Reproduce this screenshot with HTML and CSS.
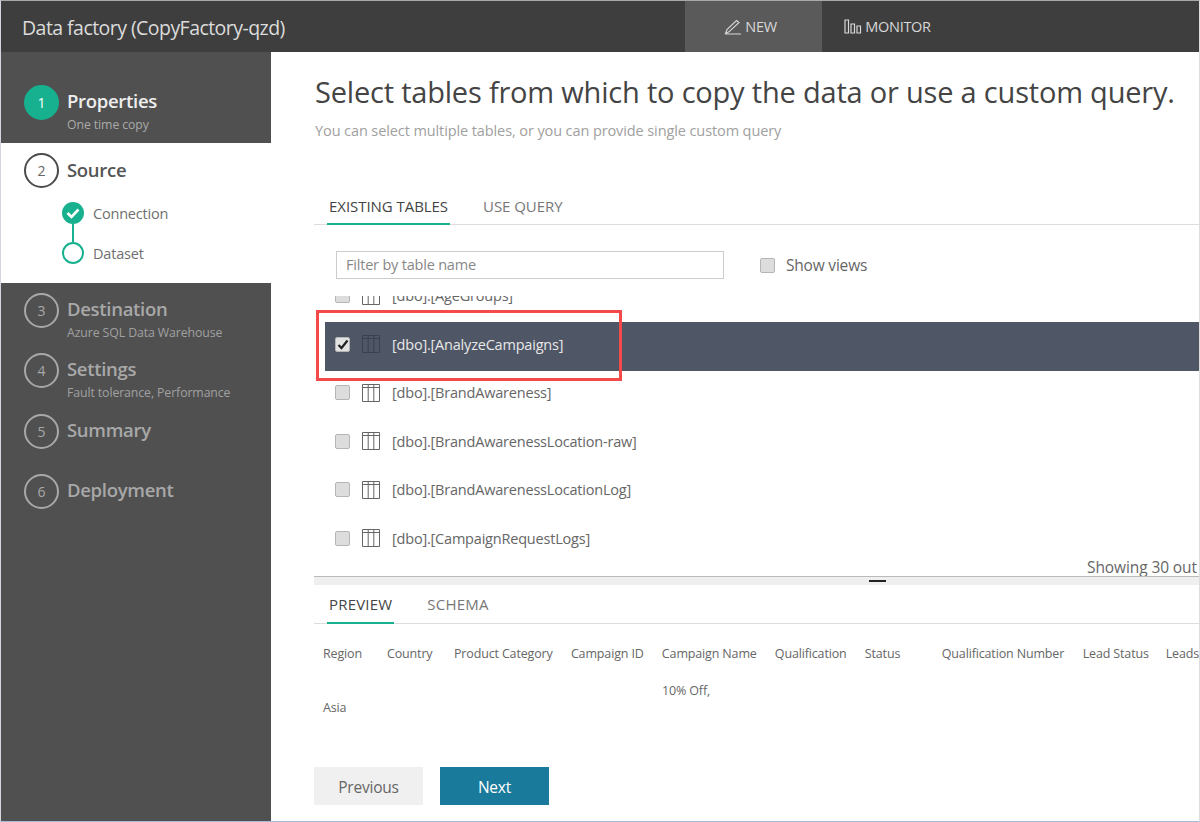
FILE: index.html
```html
<!DOCTYPE html>
<html lang="en">
<head>
<meta charset="utf-8">
<title>Copy data</title>
<link rel="stylesheet" href="styles.css">
</head>
<body>
<div class="app">
  <header class="topbar">
    <div class="brand">Data factory (CopyFactory-qzd)</div>
    <nav class="topnav">
      <div class="topnav-item active">
        <svg class="nav-icon" width="18" height="16" viewBox="0 0 18 16"><path d="M1.5 14.5 L3 10.5 L12.5 1.5 L15 3.5 L5 12.8 Z M1.5 15 H17" fill="none" stroke="#d8d8d8" stroke-width="1.1"/></svg>
        <span>NEW</span>
      </div>
      <div class="topnav-item">
        <svg class="nav-icon" width="18" height="16" viewBox="0 0 18 16"><path d="M1 1h3.5v13H1z M7 5h3.5v9H7z M13 7h3.500v7H13z" fill="none" stroke="#d8d8d8" stroke-width="1.200"/></svg>
        <span>MONITOR</span>
      </div>
    </nav>
  </header>
  <div class="body">
    <aside class="sidebar">
      <div class="step step-done">
        <div class="num num-green">1</div>
        <div class="step-text"><div class="step-title">Properties</div><div class="step-sub">One time copy</div></div>
      </div>
      <div class="step-open">
        <div class="step-head">
          <div class="num num-dark">2</div>
          <div class="step-title">Source</div>
        </div>
        <div class="subs">
          <div class="sub"><svg class="sub-dot" width="22" height="22" viewBox="0 0 22 22"><circle cx="11" cy="11" r="11" fill="#17b18f"/><path d="M5.500 11 L9.500 15 L16.500 7.500" fill="none" stroke="#fff" stroke-width="2.600"/></svg><span>Connection</span></div>
          <div class="sub-line"></div>
          <div class="sub"><div class="sub-ring"></div><span>Dataset</span></div>
        </div>
      </div>
      <div class="steps-rest">
        <div class="step-row"><div class="num">3</div><div class="step-text"><div class="step-title">Destination</div><div class="step-sub">Azure SQL Data Warehouse</div></div></div>
        <div class="step-row"><div class="num">4</div><div class="step-text"><div class="step-title">Settings</div><div class="step-sub">Fault tolerance, Performance</div></div></div>
        <div class="step-row"><div class="num">5</div><div class="step-text"><div class="step-title">Summary</div></div></div>
        <div class="step-row"><div class="num">6</div><div class="step-text"><div class="step-title">Deployment</div></div></div>
      </div>
    </aside>
    <main class="main">
      <h1 class="title">Select tables from which to copy the data or use a custom query.</h1>
      <p class="subtitle">You can select multiple tables, or you can provide single custom query</p>
      <div class="tabs tabs-top">
        <div class="tab on">EXISTING TABLES</div>
        <div class="tab">USE QUERY</div>
      </div>
      <div class="filter-row">
        <div class="filter">Filter by table name</div>
        <label class="views"><span class="check"></span>Show views</label>
      </div>
      <div class="list">
        <div class="rows">
          <div class="row"><span class="check"></span><svg class="tbl" width="18" height="18" viewBox="0 0 18 18"><path d="M.5.500h17v17H.5zM.5 3.500h17M6.200.500v17M11.800.500v17" fill="none" stroke="#666" stroke-width="1"/></svg><span>[dbo].[AgeGroups]</span></div>
          <div class="row row-sel"><span class="check check-on"><svg width="12" height="11" viewBox="0 0 12 11"><path d="M1.500 6 L4.500 9 L10.500 1.500" fill="none" stroke="#222" stroke-width="2.200"/></svg></span><svg class="tbl" width="18" height="18" viewBox="0 0 18 18"><path d="M.5.500h17v17H.5zM.5 3.500h17M6.200.500v17M11.800.500v17" fill="none" stroke="#39424f" stroke-width="1"/></svg><span>[dbo].[AnalyzeCampaigns]</span></div>
          <div class="row"><span class="check"></span><svg class="tbl" width="18" height="18" viewBox="0 0 18 18"><path d="M.5.500h17v17H.5zM.5 3.500h17M6.200.500v17M11.800.500v17" fill="none" stroke="#666" stroke-width="1"/></svg><span>[dbo].[BrandAwareness]</span></div>
          <div class="row"><span class="check"></span><svg class="tbl" width="18" height="18" viewBox="0 0 18 18"><path d="M.5.500h17v17H.5zM.5 3.500h17M6.200.500v17M11.800.500v17" fill="none" stroke="#666" stroke-width="1"/></svg><span>[dbo].[BrandAwarenessLocation-raw]</span></div>
          <div class="row"><span class="check"></span><svg class="tbl" width="18" height="18" viewBox="0 0 18 18"><path d="M.5.500h17v17H.5zM.5 3.500h17M6.200.500v17M11.800.500v17" fill="none" stroke="#666" stroke-width="1"/></svg><span>[dbo].[BrandAwarenessLocationLog]</span></div>
          <div class="row"><span class="check"></span><svg class="tbl" width="18" height="18" viewBox="0 0 18 18"><path d="M.5.500h17v17H.5zM.5 3.500h17M6.200.500v17M11.800.500v17" fill="none" stroke="#666" stroke-width="1"/></svg><span>[dbo].[CampaignRequestLogs]</span></div>
        </div>
        <div class="red-box"></div>
        <div class="showing">Showing 30 out</div>
      </div>
      <div class="splitter"><span class="grip"></span></div>
      <div class="tabs tabs-bottom">
        <div class="tab on">PREVIEW</div>
        <div class="tab">SCHEMA</div>
      </div>
      <div class="preview">
        <div class="cols">
          <span class="c1">Region</span><span class="c2">Country</span><span class="c3">Product Category</span><span class="c4">Campaign ID</span><span class="c5">Campaign Name</span><span class="c6">Qualification</span><span class="c7">Status</span><span class="c8">Qualification Number</span><span class="c9">Lead Status</span><span class="c10">Leads</span>
        </div>
        <div class="cols vals">
          <span class="c1 asia">Asia</span><span class="c2"></span><span class="c3"></span><span class="c4"></span><span class="c5 off">10% Off,</span>
        </div>
      </div>
      <div class="actions">
        <div class="btn btn-prev">Previous</div>
        <div class="btn btn-next">Next</div>
      </div>
    </main>
  </div>
</div>
</body>
</html>
```
FILE: styles.css
```css
* { box-sizing: border-box; }
html, body { margin: 0; height: 100%; }
body { background: #fff; font-family: "Open Sans", "Noto Sans", sans-serif; color: #666; overflow: hidden; }
.app { width: 1200px; height: 822px; display: flex; flex-direction: column; border-top: 1px solid #a8a8a8; border-left: 1px solid #d5d5e0; border-right: 1px solid #ddd; border-bottom: 1px solid #a8bcd8; overflow: hidden; }
.topbar { height: 51px; background: #3e3e3e; display: flex; flex: none; color: #ddd; }
.brand { width: 684px; padding: 13px 0 0 21px; font-size: 19.500px; letter-spacing: -.55px; color: #dcdcdc; white-space: nowrap; }
.topnav { display: flex; }
.topnav-item { display: flex; align-items: center; justify-content: center; gap: 3px; font-size: 14.500px; letter-spacing: -.3px; color: #d8d8d8; width: 137px; padding: 0 6px 0 0; }
.topnav-item.active { background: #5a5a5a; }
.nav-icon { flex: none; }
.body { flex: 1; display: flex; min-height: 0; }
.sidebar { width: 270px; flex: none; background: #505050; display: flex; flex-direction: column; }
.num { width: 35px; height: 35px; border-radius: 50%; border: 2px solid #a8a8a8; color: #a8a8a8; display: flex; align-items: center; justify-content: center; font-size: 14px; flex: none; }
.num-green { background: #17b18f; border-color: #17b18f; color: #fff; }
.num-dark { border-color: #4c4c4c; color: #666; }
.step-text { padding-top: 4px; }
.step-title { font-size: 18.500px; font-weight: 600; letter-spacing: -.3px; line-height: 24px; color: #a8a8a8; }
.step-sub { font-size: 12.300px; letter-spacing: -.1px; line-height: 16px; color: #a0a0a0; margin-top: 4px; white-space: nowrap; }
.step { height: 91px; display: flex; gap: 8px; padding: 33px 0 0 23px; }
.step-done .step-title { color: #eee; }
.step-done .step-sub { color: #aaa; }
.step-open { height: 140px; background: #fff; padding: 10px 0 0 23px; }
.step-head { display: flex; align-items: center; gap: 8px; }
.step-open .step-title { color: #555; padding-bottom: 2px; }
.subs { padding: 14px 0 0 38px; }
.sub { display: flex; align-items: center; gap: 9px; font-size: 14.500px; letter-spacing: -.2px; color: #6f6f6f; height: 22px; }
.sub-dot { flex: none; }
.sub-ring { width: 22px; height: 22px; border: 2.500px solid #17b18f; border-radius: 50%; flex: none; }
.sub-line { width: 2px; height: 18px; background: #17b18f; margin-left: 10px; }
.steps-rest { display: flex; flex-direction: column; gap: 25.300px; padding: 10px 0 0 23px; }
.step-row { display: flex; gap: 8px; height: 35px; }
.main { flex: 1; min-width: 0; padding-left: 43px; position: relative; }
.title { margin: 21px 0 0 1px; font-size: 29px; font-weight: 400; line-height: 38px; letter-spacing: -.2px; color: #444; white-space: nowrap; }
.subtitle { margin: 10px 0 0 1px; font-size: 14.500px; letter-spacing: -.1px; line-height: 20px; color: #a0a0a0; white-space: nowrap; }
.tabs { display: flex; border-bottom: 1px solid #ddd; font-size: 15px; }
.tab { color: #777; padding: 0 2px 7px; margin-right: 31px; letter-spacing: -.05px; border-bottom: 2px solid transparent; margin-bottom: -1px; line-height: 19px; white-space: nowrap; }
.tab.on { color: #444; border-bottom-color: #17b18f; }
.tabs-top { margin-top: 56px; padding-left: 13px; height: 28px; }
.tabs-bottom { padding-left: 13px; height: 39px; padding-top: 10px; }
.tabs-bottom .tab { padding-bottom: 8px; letter-spacing: .2px; margin-right: 31px; }
.filter-row { display: flex; align-items: center; padding: 26px 0 0 22px; }
.filter { width: 388px; height: 28px; border: 1px solid #ccc; font-size: 14.500px; color: #888; line-height: 26px; padding-left: 9px; letter-spacing: -.2px; }
.views { display: flex; align-items: center; gap: 11px; margin-left: 36px; font-size: 15.500px; letter-spacing: -.2px; color: #666; }
.check { width: 15px; height: 15px; border: 1px solid #b5b5b5; border-radius: 2px; background: #ddd; display: flex; align-items: center; justify-content: center; flex: none; }
.check-on { background: #e2e2e2; }
.list { height: 280px; margin-top: 17px; overflow: hidden; position: relative; }
.rows { margin-top: -22.500px; padding-left: 11px; }
.row { height: 48.500px; display: flex; align-items: center; padding: 0 0 4px 10px; font-size: 14.500px; letter-spacing: -.2px; color: #666; white-space: nowrap; }
.row .tbl { margin: 0 12px 0 12px; flex: none; }
.row-sel { background: #4f5666; color: #e8e8e8; }
.red-box { position: absolute; left: 2px; top: 14px; width: 306px; height: 71px; border: 3px solid #f44a4a; }
.showing { position: absolute; left: 773px; top: 262px; font-size: 15.500px; line-height: 18px; color: #666; white-space: nowrap; letter-spacing: -.1px; }
.splitter { height: 9px; background: #efefef; border-top: 1px solid #bbb; display: flex; padding-left: 555px; }
.grip { width: 17px; height: 2px; background: #222; margin-top: 3px; }
.preview { font-size: 12.500px; color: #666; letter-spacing: -.15px; padding-top: 21px; }
.cols { display: flex; white-space: nowrap; height: 20px; margin-left: 9px; }
.c1 { width: 64px; } .c2 { width: 67px; } .c3 { width: 117px; } .c4 { width: 91px; } .c5 { width: 113px; } .c6 { width: 90px; } .c7 { width: 77px; } .c8 { width: 141px; } .c9 { width: 83px; }
.vals { margin-top: 11px; height: 38px; }
.asia { padding-top: 23px; }
.off { padding-top: 6px; }
.actions { display: flex; gap: 17px; margin-top: 53px; }
.btn { height: 38px; width: 109px; display: flex; align-items: center; justify-content: center; padding-top: 2px; font-size: 15.500px; letter-spacing: -.2px; }
.btn-prev { background: #f0f0f0; color: #666; }
.btn-next { background: #1a7a9c; color: #fff; }
```
